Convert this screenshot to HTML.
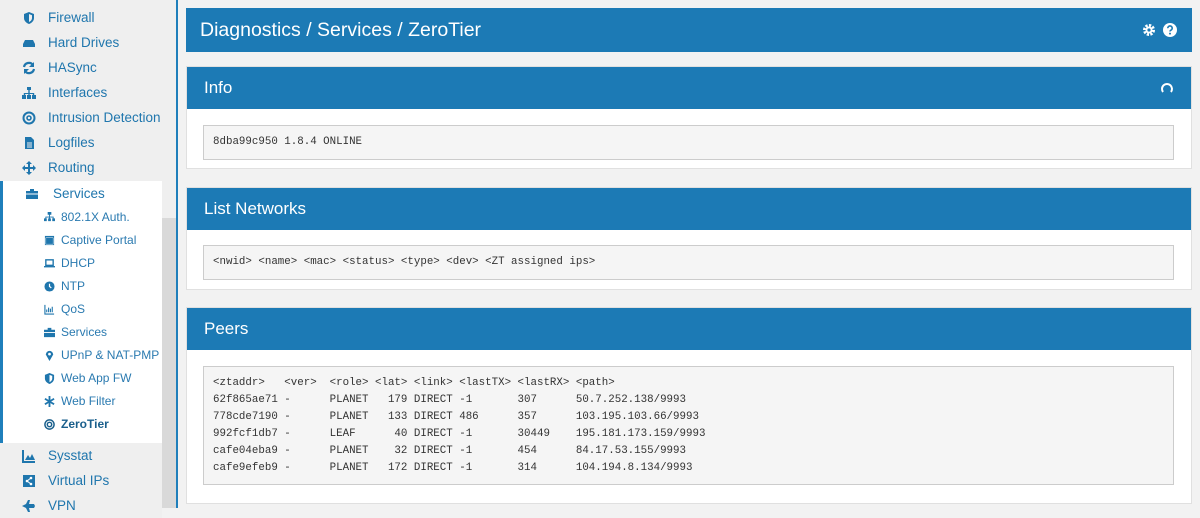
<!DOCTYPE html>
<html><head><meta charset="utf-8"><style>
*{box-sizing:border-box;margin:0;padding:0}
body{width:1200px;height:508px;overflow:hidden;background:#f2f2f2;font-family:"Liberation Sans",sans-serif;position:relative}
#side{position:absolute;left:0;top:0;width:176px;height:508px;background:#efefef}
#vline{position:absolute;left:176px;top:0;width:2px;height:508px;background:#1f7fbb}
.it{position:absolute;left:0;height:25px;width:162px;font-size:13.5px;color:#1f76ad;line-height:25px;white-space:nowrap}
.it .ic{position:absolute;left:22px;top:6px;width:14px;height:14px;color:#1f76ad}
.it span.t{position:absolute;left:48px}
#sub{position:absolute;left:0;top:181px;width:162px;height:262px;background:#fff;border-left:3px solid #1f7fbb}
#scroll{position:absolute;left:162px;top:218px;width:14px;height:290px;background:#d9d9d9}
.si{position:absolute;left:0;height:23px;font-size:12px;color:#2a7ab0;line-height:23px;width:160px;white-space:nowrap}
.si .ic{position:absolute;left:44px;top:6px;width:11px;height:11px}
.si span.t{position:absolute;left:61px}
.bar{position:absolute;left:186px;width:1006px;background:#1c7ab5;color:#fff}
.panel{position:absolute;left:186px;width:1006px;background:#fff;border:1px solid #e0e0e0}
.ph{height:42px;background:#1c7ab5;color:#fff;font-size:17px;line-height:42px;padding-left:17px}
pre{position:absolute;left:16px;width:971px;background:#f5f5f5;border:1px solid #ccc;font-family:"Liberation Mono","DejaVu Sans Mono",monospace;font-size:10.8px;color:#333;padding:8px 9px;line-height:17px}
</style></head><body>
<div id="side">
<div class="it" style="top:5px"><svg class="ic" viewBox="0 0 14 14"><path d="M7 1L2 3v4c0 3 2.5 5 5 6 2.5-1 5-3 5-6V3z" fill="currentColor"/><path d="M7 3v8c1.8-.8 3-2.3 3-4V4.3z" fill="#efefef"/></svg><span class="t">Firewall</span></div>
<div class="it" style="top:30px"><svg class="ic" viewBox="0 0 14 14"><path d="M1 8l2-4h8l2 4v3H1z" fill="currentColor"/></svg><span class="t">Hard Drives</span></div>
<div class="it" style="top:55px"><svg class="ic" viewBox="0 0 14 14"><path d="M2 6a5 5 0 0 1 9-2M12 8a5 5 0 0 1-9 2" stroke="currentColor" stroke-width="2.2" fill="none"/><path d="M12 1v5H7zM2 13V8h5z" fill="currentColor"/></svg><span class="t">HASync</span></div>
<div class="it" style="top:80px"><svg class="ic" viewBox="0 0 14 14"><path d="M5 1h4v3H5zM6.3 4h1.4v3h4.5v2h-1.4V8H7.7v1H6.3V8H3.2v1H1.8V7h4.5z M0 9h4v4H0zM5 9h4v4H5zM10 9h4v4h-4z" fill="currentColor"/></svg><span class="t">Interfaces</span></div>
<div class="it" style="top:105px"><svg class="ic" viewBox="0 0 14 14"><circle cx="7" cy="7" r="5.5" stroke="currentColor" stroke-width="2" fill="none"/><circle cx="7" cy="7" r="2" stroke="currentColor" stroke-width="1.6" fill="none"/></svg><span class="t">Intrusion Detection</span></div>
<div class="it" style="top:130px"><svg class="ic" viewBox="0 0 14 14"><path d="M3 1h6l3 3v9H3z" fill="currentColor"/><path d="M5 7h5M5 9h5M5 11h5" stroke="#efefef"/></svg><span class="t">Logfiles</span></div>
<div class="it" style="top:155px"><svg class="ic" viewBox="0 0 14 14"><path d="M7 0l3 3H8v3h3V4l3 3-3 3V8H8v3h2l-3 3-3-3h2V8H3v2L0 7l3-3v2h3V3H4z" fill="currentColor"/></svg><span class="t">Routing</span></div>
</div>
<div id="scroll"></div>
<div id="sub">
<div class="it" style="top:0px;left:-3px"><svg class="ic" viewBox="0 0 14 14" style="left:25px"><path d="M1 4h12v8H1zM5 2h4v2H5z" fill="currentColor"/><path d="M1 7h12" stroke="#fff"/></svg><span class="t" style="left:53px">Services</span></div>
<div class="si" style="top:25px;left:-3px"><svg class="ic" viewBox="0 0 12 12"><path d="M4 0h4v3H4zM5.5 3h1v2h4v2h-1V6h-3v1h-1V6h-3v1h-1V5h4z M0 7h3v3H0zM4.5 7h3v3h-3zM9 7h3v3H9z" fill="#1f76ad"/></svg><span class="t">802.1X Auth.</span></div>
<div class="si" style="top:48px;left:-3px"><svg class="ic" viewBox="0 0 12 12"><rect x="1" y="1" width="10" height="10" fill="#1f76ad"/><path d="M2 3h8v7H2z" fill="#1f76ad" stroke="#fff" stroke-width=".5"/></svg><span class="t">Captive Portal</span></div>
<div class="si" style="top:71px;left:-3px"><svg class="ic" viewBox="0 0 12 12"><rect x="2" y="2" width="8" height="6" stroke="#1f76ad" stroke-width="1.5" fill="none"/><path d="M0 9.5h12" stroke="#1f76ad" stroke-width="1.5"/></svg><span class="t">DHCP</span></div>
<div class="si" style="top:94px;left:-3px"><svg class="ic" viewBox="0 0 12 12"><circle cx="6" cy="6" r="5.5" fill="#1f76ad"/><path d="M6 3v3l2 1.5" stroke="#fff" stroke-width="1.3" fill="none"/></svg><span class="t">NTP</span></div>
<div class="si" style="top:117px;left:-3px"><svg class="ic" viewBox="0 0 12 12"><path d="M1 1v10h10M3 9V6M5 9V4M7 9V5M9 9V3" stroke="#1f76ad" stroke-width="1.2" fill="none"/></svg><span class="t">QoS</span></div>
<div class="si" style="top:140px;left:-3px"><svg class="ic" viewBox="0 0 12 12"><path d="M0 3h12v8H0zM4 1h4v2H4z" fill="#1f76ad"/><path d="M0 6h12" stroke="#fff"/></svg><span class="t">Services</span></div>
<div class="si" style="top:163px;left:-3px"><svg class="ic" viewBox="0 0 12 12"><path d="M6 12L2 5a4 4 0 1 1 8 0z" fill="#1f76ad"/><circle cx="6" cy="4.5" r="1.5" fill="#fff"/></svg><span class="t">UPnP &amp; NAT-PMP</span></div>
<div class="si" style="top:186px;left:-3px"><svg class="ic" viewBox="0 0 12 12"><path d="M6 0L1 2v4c0 3 2.5 5 5 6 2.5-1 5-3 5-6V2z" fill="#1f76ad"/><path d="M6 2v8c1.7-.8 3-2.2 3-4V3.2z" fill="#fff"/></svg><span class="t">Web App FW</span></div>
<div class="si" style="top:209px;left:-3px"><svg class="ic" viewBox="0 0 12 12"><path d="M6 0v12M1 3l10 6M1 9l10-6" stroke="#1f76ad" stroke-width="2"/></svg><span class="t">Web Filter</span></div>
<div class="si" style="top:232px;left:-3px;font-weight:bold;color:#1a5f8c"><svg class="ic" viewBox="0 0 12 12"><circle cx="6" cy="6" r="5" stroke="#1a5f8c" stroke-width="1.6" fill="none"/><circle cx="6" cy="6" r="2.4" stroke="#1a5f8c" stroke-width="1.6" fill="none"/></svg><span class="t">ZeroTier</span></div>
</div>
<div class="it" style="top:443px;background:#efefef"><svg class="ic" viewBox="0 0 14 14"><path d="M1 1v12h12" stroke="currentColor" stroke-width="2" fill="none"/><path d="M3 11l3-5 2 3 2-4 3 6z" fill="currentColor"/></svg><span class="t">Sysstat</span></div>
<div class="it" style="top:468px;background:#efefef"><svg class="ic" viewBox="0 0 14 14"><rect x="1" y="1" width="12" height="12" fill="currentColor"/><circle cx="9" cy="4" r="1.3" fill="#fff"/><circle cx="5" cy="7" r="1.3" fill="#fff"/><circle cx="9" cy="10" r="1.3" fill="#fff"/><path d="M9 4L5 7l4 3" stroke="#fff" fill="none"/></svg><span class="t">Virtual IPs</span></div>
<div class="it" style="top:493px;background:#efefef"><svg class="ic" viewBox="0 0 14 14"><path d="M0 7l4-2 2-4h2L7 5h5l1 2-1 2H7l1 4H6L4 9z" fill="currentColor"/></svg><span class="t">VPN</span></div>
<div id="vline"></div>

<div class="bar" style="top:8px;height:44px;font-size:19.5px;line-height:44px;padding-left:14px">Diagnostics / Services / ZeroTier
<svg style="position:absolute;left:956px;top:15px" width="14" height="14" viewBox="0 0 14 14"><circle cx="7" cy="7" r="4.5" stroke="#fff" stroke-width="3" stroke-dasharray="2.2 1.3" fill="none"/><circle cx="7" cy="7" r="3.5" fill="#fff"/><circle cx="7" cy="7" r="1.6" fill="#1c7ab5"/></svg>
<svg style="position:absolute;left:977px;top:15px" width="14" height="14" viewBox="0 0 14 14"><circle cx="7" cy="7" r="7" fill="#fff"/><path d="M4.8 5.2a2.2 2.2 0 1 1 3 2c-.6.3-.8.6-.8 1.3" stroke="#1c7ab5" stroke-width="1.6" fill="none"/><circle cx="7" cy="10.6" r="1" fill="#1c7ab5"/></svg>
</div>

<div class="panel" style="top:66px;height:103px"><div class="ph">Info<svg style="position:absolute;right:17px;top:14px" width="14" height="14" viewBox="0 0 14 14"><path d="M3 11A5 5 0 1 1 11 11" stroke="#fff" stroke-width="2" fill="none"/></svg></div>
<pre style="top:58px;height:35px">8dba99c950 1.8.4 ONLINE</pre></div>

<div class="panel" style="top:187px;height:103px"><div class="ph">List Networks</div>
<pre style="top:57px;height:35px">&lt;nwid&gt; &lt;name&gt; &lt;mac&gt; &lt;status&gt; &lt;type&gt; &lt;dev&gt; &lt;ZT assigned ips&gt;</pre></div>

<div class="panel" style="top:307px;height:197px"><div class="ph">Peers</div>
<pre style="top:58px;height:119px">&lt;ztaddr&gt;   &lt;ver&gt;  &lt;role&gt; &lt;lat&gt; &lt;link&gt; &lt;lastTX&gt; &lt;lastRX&gt; &lt;path&gt;
62f865ae71 -      PLANET   179 DIRECT -1       307      50.7.252.138/9993
778cde7190 -      PLANET   133 DIRECT 486      357      103.195.103.66/9993
992fcf1db7 -      LEAF      40 DIRECT -1       30449    195.181.173.159/9993
cafe04eba9 -      PLANET    32 DIRECT -1       454      84.17.53.155/9993
cafe9efeb9 -      PLANET   172 DIRECT -1       314      104.194.8.134/9993</pre></div>
</body></html>
